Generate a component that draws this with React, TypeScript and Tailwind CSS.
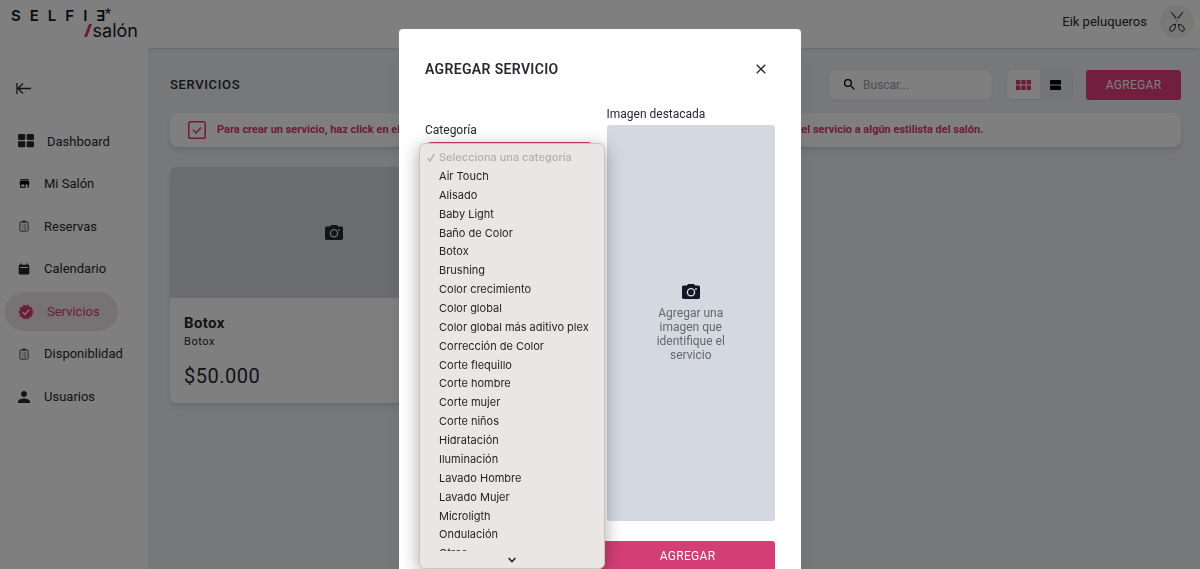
import { useState } from 'react';
import type { ReactNode } from 'react';
import { MdStore, MdSearch, MdPerson } from 'react-icons/md';

const CATEGORIES = [
  'Air Touch',
  'Alisado',
  'Baby Light',
  'Baño de Color',
  'Botox',
  'Brushing',
  'Color crecimiento',
  'Color global',
  'Color global más aditivo plex',
  'Corrección de Color',
  'Corte flequillo',
  'Corte hombre',
  'Corte mujer',
  'Corte niños',
  'Hidratación',
  'Iluminación',
  'Lavado Hombre',
  'Lavado Mujer',
  'Microligth',
  'Ondulación',
  'Otros',
];

const LOGO_LETTERS = ['S', 'E', 'L', 'F', 'I', 'Ǝ'];

function DashboardIcon() {
  return (
    <svg width="16" height="14" viewBox="0 0 16 14" fill="currentColor">
      <rect x="0" y="0" width="7.3" height="6" rx="1.2" />
      <rect x="8.7" y="0" width="7.3" height="6" rx="1.2" />
      <rect x="0" y="7.2" width="7.3" height="6" rx="1.2" />
      <rect x="8.7" y="7.2" width="7.3" height="6" rx="1.2" />
    </svg>
  );
}

function ClipboardIcon() {
  return (
    <svg width="12" height="12" viewBox="0 0 12 12" fill="none" stroke="currentColor" className="opacity-80">
      <rect x="1.8" y="1.8" width="8.4" height="9.4" rx="1.3" />
      <path d="M4 2.4V1.6h1a1 1 0 0 1 2 0h1v.8z" fill="currentColor" strokeWidth=".6" />
      <path d="M3.7 5h1M5.5 5h2.8M3.7 7h1M5.5 7h2.8M3.7 9h1M5.5 9h2.8" strokeWidth=".8" />
    </svg>
  );
}

function CalendarIcon() {
  return (
    <svg width="12" height="12" viewBox="0 0 12 12" fill="currentColor">
      <path
        fillRule="evenodd"
        d="M2.4.6h1.4v1.2h4.4V.6h1.4v1.2h.4c.8 0 1.3.5 1.3 1.3v7c0 .8-.5 1.3-1.3 1.3H2c-.8 0-1.3-.5-1.3-1.3v-7c0-.8.5-1.3 1.3-1.3h.4zM2.3 4v.9h7.4V4z"
      />
    </svg>
  );
}

function BadgeIcon() {
  return (
    <svg width="16" height="16" viewBox="0 0 24 24" fill="currentColor">
      <path
        d="M23 12l-2.44-2.78.34-3.68-3.61-.82-1.89-3.18L12 3 8.6 1.54 6.71 4.72l-3.61.81.34 3.68L1 12l2.44 2.78-.34 3.69 3.61.82 1.89 3.18L12 21l3.4 1.46 1.89-3.18 3.61-.82-.34-3.68z"
        stroke="currentColor"
        strokeLinejoin="round"
      />
      <path d="M7 12.5l3.3 3.3L17 8.5" fill="none" stroke="#fff" strokeWidth="2" />
    </svg>
  );
}

function CameraIcon() {
  return (
    <svg width="18" height="15" viewBox="0 0 18 15">
      <path
        fill="currentColor"
        d="M6.2 0h5.6l1.5 1.6h3c1 0 1.7.7 1.7 1.7v9.9c0 1-.7 1.7-1.7 1.7H1.7C.7 14.9 0 14.2 0 13.2V3.3c0-1 .7-1.7 1.7-1.7h3z"
      />
      <circle cx="9" cy="8.2" r="3.6" fill="none" stroke="#d4d8e1" strokeWidth="1.4" />
      <circle cx="14" cy="5" r=".9" fill="#d4d8e1" />
    </svg>
  );
}

function ScissorsIcon() {
  return (
    <svg width="16" height="20" viewBox="0 0 16 20" fill="none" stroke="currentColor">
      <path d="M2 0l4.800 6.400L7.300 6zM14 0L9.200 6.400 8.700 6z" fill="currentColor" strokeWidth=".6" />
      <circle cx="8" cy="9" r=".4" strokeWidth=".4" />
      <path d="M6.500 12.300c-3 .3-5.300 2-5.700 4.300-.3 2 .8 2.900 2.300 2.500 2.200-.6 3.400-3.300 3.400-6.800zM9.500 12.300c3 .3 5.300 2 5.700 4.300.3 2-.8 2.900-2.300 2.500-2.200-.6-3.400-3.300-3.400-6.800z" />
    </svg>
  );
}

interface NavItem {
  label: string;
  icon: ReactNode;
  wide?: boolean;
}

const NAV: NavItem[] = [
  { label: 'Dashboard', icon: <DashboardIcon />, wide: true },
  { label: 'Mi Salón', icon: <MdStore size={13} className="text-black" /> },
  { label: 'Reservas', icon: <ClipboardIcon /> },
  { label: 'Calendario', icon: <CalendarIcon /> },
  { label: 'Servicios', icon: <BadgeIcon />, wide: true },
  { label: 'Disponiblidad', icon: <ClipboardIcon /> },
  { label: 'Usuarios', icon: <MdPerson size={18} className="-ml-[3px]" /> },
];

function Header() {
  return (
    <header className="flex h-12 items-start justify-between bg-white pr-[6px] pl-[11px] shadow-sm">
      <a href="#" className="flex w-[127px] flex-col pt-2 text-gray-900" style={{ fontFamily: 'Inter, sans-serif' }}>
        <span className="flex items-start gap-[9px] text-[15px] leading-[15px] font-semibold">
          {LOGO_LETTERS.map((letter) => (
            <span key={letter}>{letter}</span>
          ))}
          <svg width="6" height="6" viewBox="0 0 6 6" stroke="currentColor" strokeWidth="1.100" className="-ml-[9px]">
            <path d="M3 3V.2M3 3L.3 2.100M3 3l2.700-.9M3 3L1.300 5.400M3 3l1.700 2.400" />
          </svg>
        </span>
        <span className="flex items-center justify-end text-[18px] leading-[15px]">
          <svg width="8" height="13" viewBox="0 0 8 13" className="mr-px">
            <path d="M5 0h3L3 13H0z" fill="#e0336f" />
          </svg>
          salón
        </span>
      </a>
      <div className="flex items-center gap-[13px] pt-[5px]">
        <span className="text-[13px]">Eik peluqueros</span>
        <span className="flex size-[34px] items-center justify-center rounded-full bg-[#f1f0ee] text-gray-900">
          <ScissorsIcon />
        </span>
      </div>
    </header>
  );
}

function Sidebar() {
  return (
    <aside className="w-[148px] shrink-0 bg-white">
      <button aria-label="Contraer menú" className="mt-[34px] ml-4 block">
        <svg width="16" height="13" viewBox="0 0 16 13" fill="none" stroke="currentColor" strokeWidth="1.300">
          <path d="M1 1v11M15 6.500H2M7 1.500l-5 5 5 5" />
        </svg>
      </button>
      <nav className="mt-[25px] flex h-[298px] flex-col pl-[5px]">
        {NAV.map((item) => (
          <a key={item.label} href="#" className="flex flex-1 items-center">
            <span
              className={
                item.label === 'Servicios'
                  ? 'flex h-[39px] w-[113px] items-center rounded-full bg-[#efe4e9] pl-[13px] text-[#d63a70]'
                  : 'flex h-[39px] items-center pl-[13px]'
              }
            >
              <span className={item.wide ? 'flex w-[29px] items-center' : 'flex w-[26px] items-center'}>{item.icon}</span>
              <span className="text-[13px]">{item.label}</span>
            </span>
          </a>
        ))}
      </nav>
    </aside>
  );
}

function Toolbar() {
  return (
    <div className="flex items-center">
      <h1 className="flex-1 text-[13px] font-medium tracking-wider">SERVICIOS</h1>
      <label className="flex h-[30px] w-[163px] items-center gap-[6px] rounded-md border border-gray-100 bg-white pl-3 shadow-xs">
        <MdSearch size={15} className="shrink-0 text-black" />
        <input aria-label="Buscar" placeholder="Buscar..." className="w-full min-w-0 text-[12px] outline-none placeholder:text-gray-400" />
      </label>
      <div className="ml-[14px] flex h-[31px] w-[67px] overflow-hidden rounded-md border border-gray-200">
        <button aria-label="Vista de cuadrícula" className="flex flex-1 items-center justify-center bg-white text-[#d63a70]">
          <svg width="15" height="10" viewBox="0 0 15 10" fill="currentColor">
            <path d="M0 0h4.400v4.500H0zM5.300 0h4.400v4.500H5.300zM10.600 0H15v4.500h-4.400zM0 5.400h4.400V10H0zM5.300 5.400h4.400V10H5.300zM10.600 5.400H15V10h-4.400z" />
          </svg>
        </button>
        <button aria-label="Vista de lista" className="flex flex-1 items-center justify-center bg-[#e9eaef] text-black">
          <svg width="11" height="10" viewBox="0 0 11 10" fill="currentColor">
            <rect width="11" height="4.500" rx=".8" />
            <rect y="5.500" width="11" height="4.500" rx=".8" />
          </svg>
        </button>
      </div>
      <button className="ml-[13px] h-[30px] w-[95px] rounded-[3px] bg-[#e23f7b] text-[12px] tracking-wide text-white">AGREGAR</button>
    </div>
  );
}

function ServiceCard() {
  return (
    <article className="overflow-hidden rounded-md bg-white shadow-md">
      <div className="flex h-[131px] items-center justify-center bg-[#d4d8e1]">
        <CameraIcon />
      </div>
      <div className="px-[14px] pt-4 pb-[14px]">
        <h2 className="text-[15px] leading-[18px] font-bold tracking-wide">Botox</h2>
        <p className="mt-[3px] text-[11px] leading-[14px] tracking-wider">Botox</p>
        <p className="mt-[14px] text-[20px] leading-[26px] tracking-wide">$50.000</p>
      </div>
    </article>
  );
}

function CategoryPopup({ selected, onSelect }: { selected: string; onSelect: (name: string) => void }) {
  return (
    <div
      className="absolute top-px -left-[6px] w-[186px] rounded-md border border-[#c9c5c2] bg-[#eae6e3] pt-1 text-[11px] text-[#262524] shadow-[0_4px_18px_rgba(0,0,0,0.35)]"
      style={{ fontFamily: 'Inter, sans-serif' }}
    >
      <div className="h-[403px] overflow-hidden">
        <ul role="listbox" aria-label="Categoría" className="flex h-[415px] flex-col">
          <li className="flex flex-1 items-center gap-1 pl-[7px] font-medium text-[#b3afac]">
            <svg width="8" height="9" viewBox="0 0 8 9" fill="none" stroke="currentColor" strokeWidth="1.400">
              <path d="M.7 5l2.200 3L7.300.8" />
            </svg>
            Selecciona una categoría
          </li>
          {CATEGORIES.map((name) => (
            <li
              key={name}
              role="option"
              aria-selected={name === selected}
              onClick={() => onSelect(name)}
              className="flex flex-1 items-center pl-[19px] whitespace-nowrap"
            >
              {name}
            </li>
          ))}
        </ul>
      </div>
      <div className="flex h-[17px] items-center justify-center">
        <svg width="8" height="6" viewBox="0 0 8 6" fill="none" stroke="currentColor" strokeWidth="1.600">
          <path d="M.6 1L4 4.500 7.400 1" />
        </svg>
      </div>
    </div>
  );
}

function AddServiceDialog() {
  const [category, setCategory] = useState('');

  return (
    <div className="fixed inset-0 z-10 flex items-start justify-center overflow-hidden bg-black/50 pt-[29px]">
      <div role="dialog" aria-label="Agregar servicio" className="w-full max-w-[402px] rounded-[4px] bg-white px-[26px] pt-[30px] pb-8 shadow-xl">
        <div className="flex items-center justify-between">
          <h2 className="text-[14px] leading-5 font-semibold tracking-wide">AGREGAR SERVICIO</h2>
          <button aria-label="Cerrar" className="mr-[9px]">
            <svg width="10" height="10" viewBox="0 0 10 10" fill="none" stroke="currentColor" strokeWidth="1.300">
              <path d="M.7.7l8.600 8.600M9.300.7L.7 9.300" />
            </svg>
          </button>
        </div>
        <div className="mt-[26px] grid grid-cols-2 gap-[13px]">
          <div className="pt-[17px]">
            <label htmlFor="category" className="block text-[12px] leading-4">
              Categoría
            </label>
            <div className="relative mt-1">
              <select
                id="category"
                value={category}
                onChange={(e) => setCategory(e.target.value)}
                className="h-[30px] w-full rounded-md border border-[#d63a70] bg-white px-2 text-[12px]"
              >
                <option value="">Selecciona una categoría</option>
                {CATEGORIES.map((name) => (
                  <option key={name}>{name}</option>
                ))}
              </select>
              <CategoryPopup selected={category} onSelect={setCategory} />
            </div>
          </div>
          <div>
            <p className="text-[12px] leading-[18px]">Imagen destacada</p>
            <button className="mt-[2px] flex h-[396px] w-full flex-col items-center justify-center gap-[7px] rounded-[3px] bg-[#d4d8e1] text-gray-900">
              <CameraIcon />
              <span className="w-[70px] text-[12px] leading-[14px] text-[#66676c]">Agregar una imagen que identifique el servicio</span>
            </button>
          </div>
        </div>
        <button className="mt-5 ml-auto block h-[30px] w-1/2 rounded-[3px] bg-[#d33f74] text-[12px] tracking-wide text-white">AGREGAR</button>
      </div>
    </div>
  );
}

export default function App() {
  return (
    <div className="flex h-screen flex-col overflow-hidden bg-[#eff0f5] text-[#27282d]" style={{ fontFamily: 'Roboto, sans-serif' }}>
      <Header />
      <div className="flex flex-1">
        <Sidebar />
        <main className="flex-1 pt-[21px] pr-[19px] pl-[22px]">
          <Toolbar />
          <div className="mt-[13px] flex h-[34px] items-center gap-[11px] rounded-lg bg-white pl-[18px] text-[#d63a70] shadow-md">
            <svg width="18" height="18" viewBox="0 0 18 18" fill="none" stroke="currentColor" strokeWidth="1.500">
              <rect x=".8" y=".8" width="16.400" height="16.400" rx="1.800" />
              <path d="M5 9l3 3 5-5.500" />
            </svg>
            <p className="text-[11px] font-bold whitespace-nowrap">
              Para crear un servicio, haz click en el botón "Agregar". Recuerda que luego de crear el servicio, también debes asignar el servicio a algún estilista del salón.
            </p>
          </div>
          <section className="mt-5 grid grid-cols-3 gap-[14px]">
            <ServiceCard />
          </section>
        </main>
      </div>
      <AddServiceDialog />
    </div>
  );
}
